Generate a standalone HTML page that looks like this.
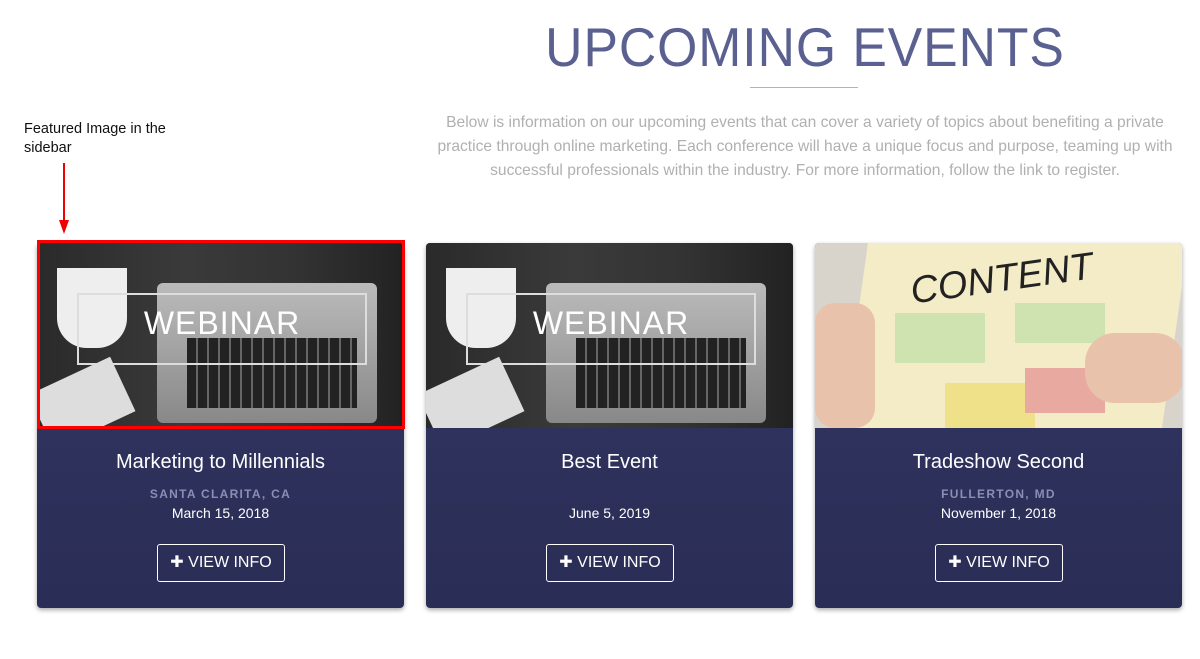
<!DOCTYPE html>
<html><head><style>
body{margin:0;width:1200px;height:659px;background:#fff;font-family:"Liberation Sans",sans-serif;position:relative;overflow:hidden}
.abs{position:absolute}
h1{position:absolute;left:400px;width:810px;top:16px;margin:0;text-align:center;font-weight:normal;font-size:55px;letter-spacing:1px;color:#5a6090;line-height:62px;transform:scaleX(.94)}
.line{left:750px;top:87px;width:108px;height:1px;background:#e6b23c}
.p{left:425px;width:760px;top:111px;text-align:center;color:#b0b0b0;font-size:15.6px;line-height:24px}
.note{left:24px;top:120px;font-size:14.5px;line-height:19px;color:#111}
.card{position:absolute;top:243px;width:367px;height:365px;border-radius:4px;overflow:hidden;background:linear-gradient(#333764,#2a2d55);box-shadow:0 2px 5px rgba(0,0,0,.35)}
.img{position:absolute;left:0;top:0;width:367px;height:185px;overflow:hidden}
.t{position:absolute;top:208px;width:100%;text-align:center;color:#fff;font-size:20px}
.loc{position:absolute;top:244px;width:100%;text-align:center;color:#8a8fb3;font-size:12px;font-weight:bold;letter-spacing:1.3px}
.d{position:absolute;top:262px;width:100%;text-align:center;color:#fff;font-size:14px}
.btn{position:absolute;left:120px;top:301px;width:126px;height:36px;border:1px solid #fff;border-radius:3px;color:#fff;font-size:16px;line-height:36px;text-align:center}
.web{background:linear-gradient(90deg,#2a2a2a,#3a3a3a 40%,#333 70%,#222)}
</style></head><body>
<h1>UPCOMING EVENTS</h1>
<div class="abs line"></div>
<div class="abs p">Below is information on our upcoming events that can cover a variety of topics about benefiting a private practice through online marketing. Each conference will have a unique focus and purpose, teaming up with successful professionals within the industry. For more information, follow the link to register.</div>
<div class="abs note">Featured Image in the<br>sidebar</div>
<div class="abs" style="left:63px;top:163px;width:2px;height:60px;background:#e00"></div>
<div class="abs" style="left:59px;top:220px;width:0;height:0;border-left:5px solid transparent;border-right:5px solid transparent;border-top:14px solid #e00"></div>

<div class="card" style="left:37px">
 <div class="img web">
  <div class="abs" style="left:120px;top:40px;width:220px;height:140px;background:linear-gradient(#bbb,#888);border-radius:6px"></div>
  <div class="abs" style="left:150px;top:95px;width:170px;height:70px;background:repeating-linear-gradient(90deg,#222 0 9px,#666 9px 11px)"></div>
  <div class="abs" style="left:20px;top:25px;width:70px;height:80px;background:#eee;border-radius:0 0 30px 30px"></div>
  <div class="abs" style="left:0;top:130px;width:90px;height:60px;background:#ddd;transform:rotate(-25deg)"></div>
  <div class="abs" style="left:40px;top:50px;width:286px;height:68px;border:2px solid #ddd"></div>
  <div class="abs" style="left:40px;top:62px;width:290px;text-align:center;color:#fff;font-size:32px;letter-spacing:1px">WEBINAR</div>
 </div>
 <div class="t">Marketing to Millennials</div>
 <div class="loc">SANTA CLARITA, CA</div>
 <div class="d">March 15, 2018</div>
 <div class="btn">✚ VIEW INFO</div>
</div>
<div class="abs" style="left:37px;top:240px;width:362px;height:183px;border:3px solid #f00"></div>

<div class="card" style="left:426px">
 <div class="img web">
  <div class="abs" style="left:120px;top:40px;width:220px;height:140px;background:linear-gradient(#bbb,#888);border-radius:6px"></div>
  <div class="abs" style="left:150px;top:95px;width:170px;height:70px;background:repeating-linear-gradient(90deg,#222 0 9px,#666 9px 11px)"></div>
  <div class="abs" style="left:20px;top:25px;width:70px;height:80px;background:#eee;border-radius:0 0 30px 30px"></div>
  <div class="abs" style="left:0;top:130px;width:90px;height:60px;background:#ddd;transform:rotate(-25deg)"></div>
  <div class="abs" style="left:40px;top:50px;width:286px;height:68px;border:2px solid #ddd"></div>
  <div class="abs" style="left:40px;top:62px;width:290px;text-align:center;color:#fff;font-size:32px;letter-spacing:1px">WEBINAR</div>
 </div>
 <div class="t">Best Event</div>
 <div class="d">June 5, 2019</div>
 <div class="btn">✚ VIEW INFO</div>
</div>

<div class="card" style="left:815px">
 <div class="img" style="background:#d8d4cc">
  <div class="abs" style="left:40px;top:0;width:320px;height:185px;background:#f3ecc6;transform:skewX(-8deg)"></div>
  <div class="abs" style="left:80px;top:70px;width:90px;height:50px;background:#cfe3b0"></div>
  <div class="abs" style="left:200px;top:60px;width:90px;height:40px;background:#cfe3b0"></div>
  <div class="abs" style="left:130px;top:140px;width:90px;height:45px;background:#efe08a"></div>
  <div class="abs" style="left:210px;top:125px;width:80px;height:45px;background:#e7a9a0"></div>
  <div class="abs" style="left:95px;top:15px;font-size:38px;color:#222;font-style:italic;transform:rotate(-8deg)">CONTENT</div>
  <div class="abs" style="left:0;top:60px;width:60px;height:125px;background:#e8c2aa;border-radius:20px"></div>
  <div class="abs" style="left:270px;top:90px;width:100px;height:70px;background:#e8c2aa;border-radius:30px"></div>
 </div>
 <div class="t">Tradeshow Second</div>
 <div class="loc">FULLERTON, MD</div>
 <div class="d">November 1, 2018</div>
 <div class="btn">✚ VIEW INFO</div>
</div>
</body></html>
